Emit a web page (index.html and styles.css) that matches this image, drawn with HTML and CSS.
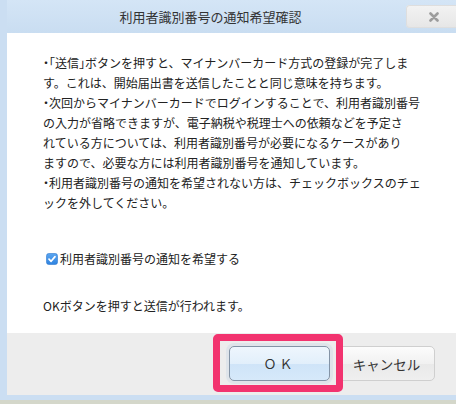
FILE: index.html
```html
<!DOCTYPE html>
<html lang="ja">
<head>
<meta charset="utf-8">
<title>利用者識別番号の通知希望確認</title>
<link rel="stylesheet" href="styles.css">
</head>
<body>
<div class="dialog">
  <div class="titlebar">
    <div class="title">利用者識別番号の通知希望確認</div>
    <div class="close">
      <svg width="10" height="10" viewBox="0 0 10 10"><path d="M1.5 1.5 L8.5 8.5 M8.5 1.5 L1.5 8.5" stroke="#9c9c9c" stroke-width="2.6" stroke-linecap="round"/></svg>
    </div>
  </div>
  <div class="content">
    <p class="message"><span class="half">・「</span>送信<span class="half">」</span>ボタンを押すと、マイナンバーカード方式の登録が完了しま<br>す。これは、開始届出書を送信したことと同じ意味を持ちます。<br><span class="half">・</span>次回からマイナンバーカードでログインすることで、利用者識別番号<br>の入力が省略できますが、電子納税や税理士への依頼などを予定さ<br>れている方については、利用者識別番号が必要になるケースがあり<br>ますので、必要な方には利用者識別番号を通知しています。<br><span class="half">・</span>利用者識別番号の通知を希望されない方は、チェックボックスのチェ<br>ックを外してください。</p>
    <label class="check">
      <svg class="box" width="12" height="12" viewBox="0 0 12 12"><defs><linearGradient id="cb" x1="0" y1="0" x2="0" y2="1"><stop offset="0" stop-color="#5aa5f0"/><stop offset="1" stop-color="#2f83e0"/></linearGradient></defs><rect x="0.5" y="0.5" width="11" height="11" rx="2.2" fill="url(#cb)" stroke="#2f79cf" stroke-width="0.6"/><path d="M3 6.2 L5.1 8.3 L9 3.6" fill="none" stroke="#fff" stroke-width="1.7" stroke-linecap="round" stroke-linejoin="round"/></svg>
      <span>利用者識別番号の通知を希望する</span>
    </label>
    <p class="note">OKボタンを押すと送信が行われます。</p>
  </div>
  <div class="footer">
    <div class="focus-wrap">
      <button class="btn btn-ok">ＯＫ</button>
      <div class="highlight"></div>
    </div>
    <button class="btn btn-cancel">キャンセル</button>
  </div>
</div>
<div class="strip"></div>
</body>
</html>
```

FILE: styles.css
```css
html, body {
  margin: 0;
  padding: 0;
  overflow: hidden;
}
body {
  width: 456px;
  height: 404px;
  background: #d4d7ca;
  font-family: "Noto Sans CJK JP", "Noto Sans", sans-serif;
  color: #222;
}
.dialog {
  width: 452px;
  padding: 0 0 5px 7px;
  background: #cbdef2;
  overflow: hidden;
}
.titlebar {
  height: 33px;
  display: flex;
  align-items: flex-start;
  background: linear-gradient(#d4e5f6, #c9ddf1);
}
.title {
  flex: 1;
  text-align: center;
  padding-left: 8px;
  font-size: 13px;
  line-height: 33px;
  color: #333;
}
.close {
  width: 56px;
  height: 23px;
  margin-top: 5px;
  margin-right: -3px;
  border-radius: 4px 0 0 4px;
  background: linear-gradient(#f3f3f3, #e6e6e6);
  box-shadow: inset 0 0 0 1px #dedede;
  display: flex;
  align-items: center;
  justify-content: center;
}
.close svg { display: block; }
.content {
  background: #fff;
  padding: 20px 0 17px 36px;
  font-size: 12px;
  line-height: 20px;
  white-space: nowrap;
}
.message, .note {
  margin: 0;
}
.half {
  font-feature-settings: "halt";
}
.check {
  display: flex;
  align-items: center;
  gap: 2px;
  margin: 36px 0 0 3px;
  height: 20px;
  font-size: 12px;
}
.check .box { display: block; }
.note {
  margin-top: 27px;
}
.footer {
  height: 62px;
  background: #ededed;
  display: flex;
  align-items: flex-start;
  padding: 13px 0 0 222px;
  box-sizing: border-box;
  gap: 8px;
}
.focus-wrap {
  position: relative;
}
.btn {
  display: block;
  height: 35px;
  border-radius: 5px;
  font-family: "Noto Sans CJK JP", "Noto Sans", sans-serif;
  font-size: 13px;
  color: #333;
  padding: 0;
  margin: 0;
}
.btn-ok {
  width: 101px;
  border: 1px solid #8393a6;
  background: linear-gradient(#eef6fd 0%, #e2effb 50%, #cfe4f8 52%, #d6e9fa 100%);
  letter-spacing: 3px;
  box-shadow: 0 0 0 3px #dfe4ea;
}
.btn-cancel {
  width: 97px;
  border: 1px solid #cfcfcf;
  background: linear-gradient(#fcfcfc, #f1f1f1 50%, #e9e9e9 52%, #efefef);
  font-size: 13.5px;
}
.highlight {
  position: absolute;
  left: -16px;
  right: -13px;
  top: -12px;
  bottom: -11px;
  border: 7px solid #f2336f;
  border-radius: 5px;
}
.strip {
  height: 4px;
  background: #d4d7ca;
}
```
